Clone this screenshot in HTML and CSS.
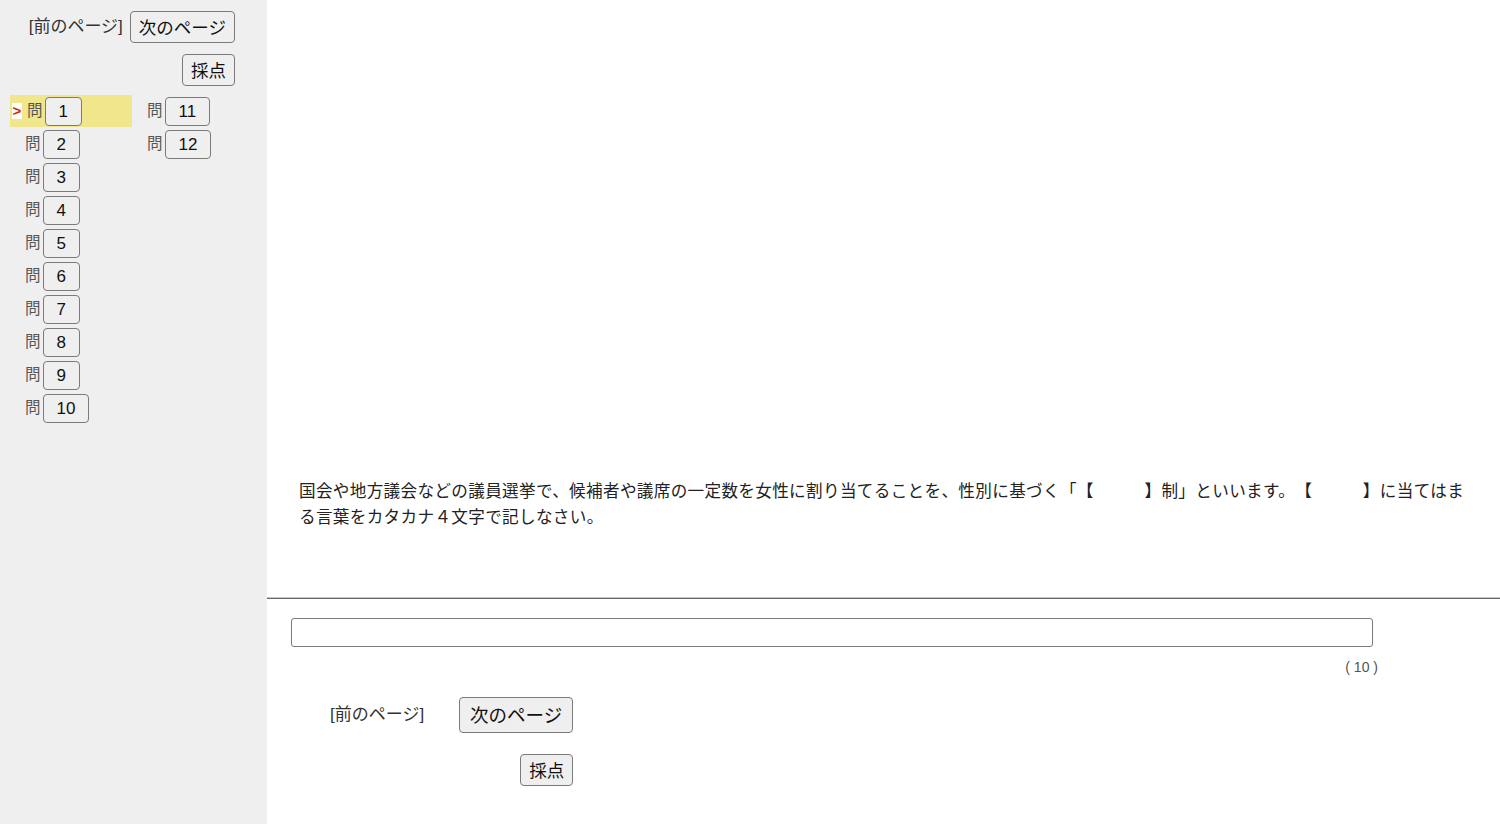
FILE: index.html
```html
<!DOCTYPE html>
<html lang="ja">
<head>
  <meta charset="UTF-8">
  <title>問題</title>
  <link rel="stylesheet" href="styles.css">
</head>
<body>
  <div class="layout">
    <aside class="sidebar">
      <div class="side-nav">
        <div class="nav-row">
          <span class="prev">[前のページ]</span>
          <button class="btn">次のページ</button>
        </div>
        <button class="btn">採点</button>
      </div>

      <div class="q-list">
        <div class="q-col">
          <div class="q-item current"><span class="mark">&gt;</span><span class="q-label">問</span><button class="q-btn">1</button></div>
          <div class="q-item"><span class="q-label">問</span><button class="q-btn">2</button></div>
          <div class="q-item"><span class="q-label">問</span><button class="q-btn">3</button></div>
          <div class="q-item"><span class="q-label">問</span><button class="q-btn">4</button></div>
          <div class="q-item"><span class="q-label">問</span><button class="q-btn">5</button></div>
          <div class="q-item"><span class="q-label">問</span><button class="q-btn">6</button></div>
          <div class="q-item"><span class="q-label">問</span><button class="q-btn">7</button></div>
          <div class="q-item"><span class="q-label">問</span><button class="q-btn">8</button></div>
          <div class="q-item"><span class="q-label">問</span><button class="q-btn">9</button></div>
          <div class="q-item"><span class="q-label">問</span><button class="q-btn">10</button></div>
        </div>
        <div class="q-col">
          <div class="q-item"><span class="q-label">問</span><button class="q-btn">11</button></div>
          <div class="q-item"><span class="q-label">問</span><button class="q-btn">12</button></div>
        </div>
      </div>
    </aside>

    <main class="main">
      <section class="question">
        <p class="question-text">国会や地方議会などの議員選挙で、候補者や議席の一定数を女性に割り当てることを、性別に基づく「【　　　】制」といいます。【　　　】に当てはまる言葉をカタカナ４文字で記しなさい。</p>
      </section>

      <hr class="divider">

      <section class="answer">
        <div class="answer-box">
          <input type="text" class="answer-input">
          <div class="count">( 10 )</div>
        </div>

        <div class="bottom-nav">
          <div class="nav-row wide">
            <span class="prev">[前のページ]</span>
            <button class="btn btn-large">次のページ</button>
          </div>
          <button class="btn">採点</button>
        </div>
      </section>
    </main>
  </div>
</body>
</html>
```

FILE: styles.css
```css
body {
  margin: 0;
  font-family: "Liberation Sans", "Noto Sans CJK JP", sans-serif;
  color: #222;
}

.layout {
  display: flex;
  min-height: 824px;
}

.sidebar {
  width: 267px;
  flex-shrink: 0;
  background: #efefef;
}

.side-nav {
  display: flex;
  flex-direction: column;
  align-items: flex-end;
  gap: 11px;
  padding: 11px 32px 0 0;
}

.nav-row {
  display: flex;
  align-items: center;
  gap: 7px;
}

.nav-row.wide {
  gap: 35px;
}

.prev {
  font-size: 17px;
  color: #333;
  line-height: 20px;
}

.btn {
  font-family: "Liberation Sans", "Noto Sans CJK JP", sans-serif;
  font-size: 17.5px;
  line-height: 20px;
  padding: 6px 8px 4px;
  color: #111;
  background: #efefef;
  border: 1px solid #7a7a7a;
  border-radius: 4px;
}

.btn-large {
  font-size: 18.5px;
  line-height: 22px;
  padding: 7px 10px 5px;
}

.q-list {
  display: flex;
  padding: 9px 0 0 10px;
}

.q-col {
  width: 122px;
}

.q-item {
  display: flex;
  align-items: center;
  height: 33px;
  padding-left: 15px;
  box-sizing: border-box;
}

.q-item.current {
  background: #f0e68c;
  height: 32px;
  margin-bottom: 1px;
  padding-left: 2px;
}

.mark {
  width: 10px;
  margin-right: 5px;
  background: #fff;
  color: #d42a00;
  font-weight: bold;
  font-size: 15px;
  line-height: 16px;
  text-align: center;
}

.q-label {
  font-size: 15.5px;
  line-height: 18px;
  color: #555;
  margin: 0 2px 1px 0;
}

.q-btn {
  font-family: "Liberation Sans", sans-serif;
  font-size: 17px;
  line-height: 19px;
  padding: 4px 13px;
  color: #111;
  background: #efefef;
  border: 1px solid #7a7a7a;
  border-radius: 4px;
}

.main {
  flex: 1;
  background: #fff;
}

.question {
  height: 597px;
  display: flex;
  align-items: flex-end;
  padding: 0 30px 68px 32px;
  box-sizing: border-box;
}

.question-text {
  margin: 0;
  font-family: "Noto Sans CJK JP", sans-serif;
  font-size: 16.6px;
  line-height: 26px;
  letter-spacing: 0.33px;
  color: #222;
  text-spacing-trim: space-all;
}

.divider {
  margin: 0;
  border: none;
  border-top: 1px solid #c8c8c8;
  border-bottom: 1px solid #666;
}

.answer {
  padding: 19px 0 0 24px;
}

.answer-box {
  width: 1087px;
}

.answer-input {
  display: block;
  width: 1082px;
  height: 29px;
  box-sizing: border-box;
  border: 1px solid #7a7a7a;
  border-radius: 3px;
}

.count {
  margin-top: 12px;
  text-align: right;
  font-size: 14px;
  line-height: 16px;
  color: #555;
}

.bottom-nav {
  display: inline-flex;
  flex-direction: column;
  align-items: flex-end;
  gap: 21px;
  margin: 22px 0 0 39px;
}
```
